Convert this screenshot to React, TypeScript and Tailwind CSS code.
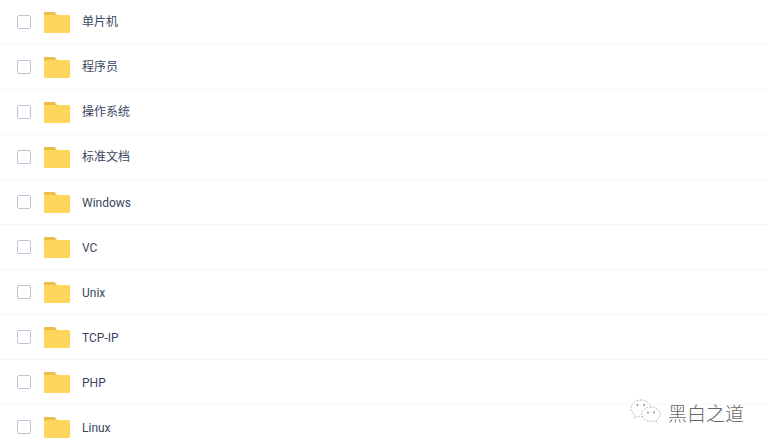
const rows = [
  { name: "单片机", pad: "pt-px" },
  { name: "程序员", pad: "pt-px" },
  { name: "操作系统", pad: "pt-px" },
  { name: "标准文档", pad: "pt-px" },
  { name: "Windows", pad: "pt-[2px]" },
  { name: "VC", pad: "pt-[2px]" },
  { name: "Unix", pad: "pt-[2px]" },
  { name: "TCP-IP", pad: "pt-[2px]" },
  { name: "PHP", pad: "pt-[2px]" },
  { name: "Linux", pad: "pt-[2px]" },
];

function Folder() {
  return (
    <svg width="26" height="21" viewBox="0 0 26 21" className="shrink-0">
      <path d="M1 0H9.500C10.500 0 11 .4 11.400 1L13 3V8H0V1C0 .4 .4 0 1 0Z" fill="#EDBD4C" />
      <path d="M1 3H25C25.600 3 26 3.400 26 4V20C26 20.600 25.600 21 25 21H1C.4 21 0 20.600 0 20V4C0 3.400 .4 3 1 3Z" fill="#FFD65C" />
    </svg>
  );
}

function WeChat() {
  return (
    <svg width="32" height="26" viewBox="0 0 32 26" fill="#fff" stroke="#999" strokeWidth="0.7" strokeDasharray="1.600 1.400">
      <path d="M11 1C5.500 1 1 4.800 1 9.500c0 2.800 1.600 5 4 6.600L4 19l3.400-1.700c1 .3 2 .5 3.600.5 .8 0 1.500 0 2-.2" />
      <path d="M11 1c4.800 0 9 2.800 9.800 7" />
      <path d="M21 8c-5 0-9 3.200-9 7.200s4 7.200 9 7.200c1 0 2-.2 3-.5l3 1.600-.8-2.600c2.300-1.400 3.800-3.400 3.800-5.700C30 11.200 26 8 21 8Z" />
      <circle cx="7.500" cy="6" r="0.900" fill="#888" stroke="none" />
      <circle cx="14" cy="6" r="0.900" fill="#888" stroke="none" />
      <circle cx="18" cy="13.500" r="0.900" fill="#888" stroke="none" />
      <circle cx="24" cy="13.500" r="0.900" fill="#888" stroke="none" />
    </svg>
  );
}

export default function App() {
  return (
    <div className="relative h-[447px] w-[768px] overflow-hidden bg-white font-['Roboto','Noto_Sans_CJK_SC',sans-serif]">
      {rows.map(({ name, pad }) => (
        <div key={name} className="flex h-[45px] items-center border-b border-[#f4f6fb] pl-[17px] pb-px">
          <span className="h-[14px] w-[14px] shrink-0 rounded-[2px] border border-[#bcc6d4] bg-white" />
          <span className="ml-[13px] flex pt-[2px]"><Folder /></span>
          <span className={`ml-[12px] ${pad} text-[12px] leading-none text-[#3a4660]`}>{name}</span>
        </div>
      ))}
      <div className="absolute left-[630px] top-[399px] flex items-center gap-[6px]">
        <WeChat />
        <span className="text-[19px] font-light leading-none text-[#666] font-['Noto_Sans_CJK_SC',sans-serif]">黑白之道</span>
      </div>
    </div>
  );
}
